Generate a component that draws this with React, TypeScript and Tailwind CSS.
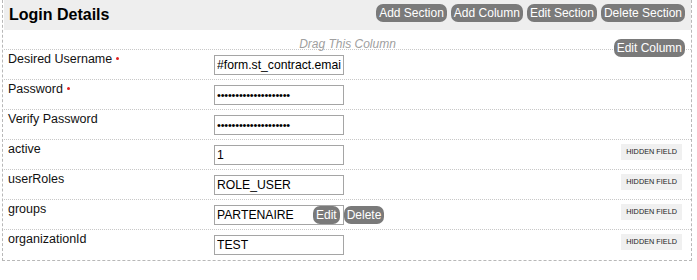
const font = { fontFamily: '"Liberation Sans", Arial, sans-serif' }

type Field = {
  label: string
  required?: boolean
  value: string
  password?: boolean
  hidden?: boolean
  actions?: boolean
}

const fields: Field[] = [
  { label: 'Desired Username', required: true, value: '#form.st_contract.email' },
  { label: 'Password', required: true, value: 'xxxxxxxxxxxxxxxxxxxx', password: true },
  { label: 'Verify Password', value: 'xxxxxxxxxxxxxxxxxxxx', password: true },
  { label: 'active', value: '1', hidden: true },
  { label: 'userRoles', value: 'ROLE_USER', hidden: true },
  { label: 'groups', value: 'PARTENAIRE', hidden: true, actions: true },
  { label: 'organizationId', value: 'TEST', hidden: true },
]

function Pill({ children, className = '' }: { children: React.ReactNode; className?: string }) {
  return (
    <button
      className={`h-[18px] px-[3px] rounded-[7px] bg-[#7a7a7a] text-white text-[12px] leading-[18px] whitespace-nowrap ${className}`}
    >
      {children}
    </button>
  )
}

export default function App() {
  return (
    <div className="w-[697px] h-[280px] bg-white" style={font}>
      <div className="ml-[2px] w-[690px] border-l border-r border-b border-dashed border-[#b8b8b8] pl-[1px]">
        {/* Section header */}
        <div className="h-[30px] bg-[#eeeeee] flex items-start justify-between pl-[5px] pr-[6px]">
          <h2 className="text-[16px] leading-[30px] font-bold text-black">Login Details</h2>
          <div className="flex gap-[4px] mt-[4px]">
            <Pill>Add Section</Pill>
            <Pill>Add Column</Pill>
            <Pill>Edit Section</Pill>
            <Pill>Delete Section</Pill>
          </div>
        </div>

        {/* Column drag handle */}
        <div className="relative h-[20px] border-b border-dotted border-[#c8c8c8] text-center">
          <span className="text-[12px] italic text-[#a0a0a0] leading-[20px] relative top-[1px]">Drag This Column</span>
          <Pill className="absolute right-[6px] top-[9px] h-[17px] leading-[17px]">Edit Column</Pill>
        </div>

        {/* Fields */}
        {fields.map((f, i) => (
          <div
            key={f.label}
            className={`flex items-start h-[30px] pl-[4px] pr-[9px] ${
              i < fields.length - 1 ? 'border-b border-dotted border-[#c8c8c8]' : ''
            }`}
          >
            <div className="w-[206px] pt-[2px] text-[12.5px] leading-[15px] text-[#111]">
              {f.label}
              {f.required && (
                <span className="inline-block ml-[4px] w-[3px] h-[3px] rounded-full bg-[#e02020] align-middle relative top-[-1px]" />
              )}
            </div>
            <div className="flex items-start mt-[5px]">
              <input
                readOnly
                type={f.password ? 'password' : 'text'}
                value={f.value}
                className={`w-[130px] h-[20px] border border-[#a5a5a5] bg-white px-[2px] text-black outline-none ${
                  f.password ? 'text-[11px] tracking-[-0.2px]' : 'text-[12.2px]'
                }`}
                style={font}
              />
              {f.actions && (
                <div className="flex gap-[4px] -ml-[31px] mt-[1px]">
                  <Pill className="h-[17px] leading-[17px]">Edit</Pill>
                  <Pill className="h-[17px] leading-[17px]">Delete</Pill>
                </div>
              )}
            </div>
            <div className="flex-1" />
            {f.hidden && (
              <span className="mt-[4px] h-[16px] px-[5px] bg-[#f0f0f0] text-[7.3px] leading-[16px] text-[#222]">
                HIDDEN FIELD
              </span>
            )}
          </div>
        ))}
      </div>
    </div>
  )
}
